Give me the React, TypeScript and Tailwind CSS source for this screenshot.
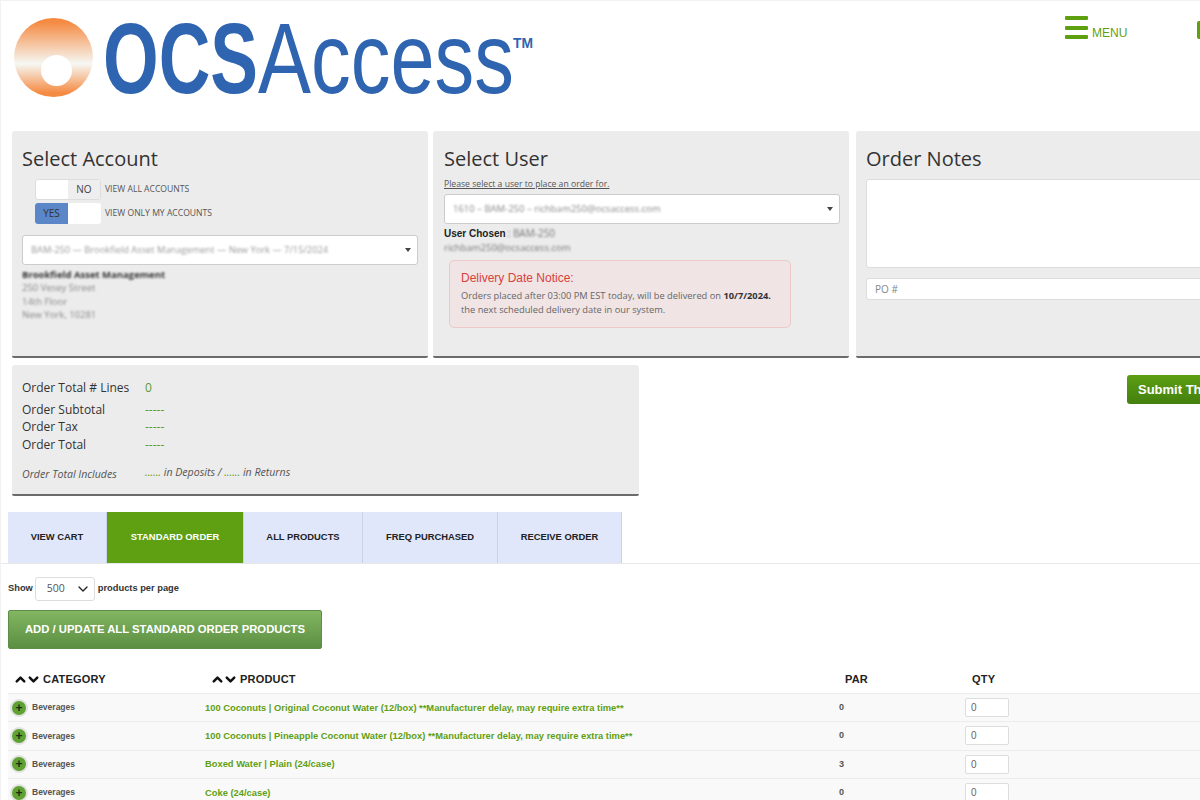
import { ChevronDown, ChevronUp } from "lucide-react";

const rows = [
  { name: "100 Coconuts | Original Coconut Water (12/box) **Manufacturer delay, may require extra time**", par: 0 },
  { name: "100 Coconuts | Pineapple Coconut Water (12/box) **Manufacturer delay, may require extra time**", par: 0 },
  { name: "Boxed Water | Plain (24/case)", par: 3 },
  { name: "Coke (24/case)", par: 0 },
];

const tabs = [
  { label: "VIEW CART", width: "w-[99px]" },
  { label: "STANDARD ORDER", width: "w-[137px]", active: true },
  { label: "ALL PRODUCTS", width: "w-[119px]" },
  { label: "FREQ PURCHASED", width: "w-[135px]" },
  { label: "RECEIVE ORDER", width: "w-[124px]" },
];

function Logo() {
  return (
    <svg width="540" height="104" viewBox="0 0 540 104" className="block shrink-0">
      <defs>
        <linearGradient id="disc" x1="0" y1="0" x2="0" y2="1">
          <stop offset="0.05" stopColor="#f58a42" />
          <stop offset="0.58" stopColor="#f6f8f4" />
          <stop offset="0.95" stopColor="#f58a42" />
        </linearGradient>
      </defs>
      <circle cx="52.5" cy="56.5" r="39.5" fill="url(#disc)" />
      <circle cx="55.5" cy="69.5" r="15.5" fill="#fff" />
      <text x="102" y="92" fontFamily="Liberation Sans" fontWeight="700" fontSize="100" fill="#2f65b0" textLength="155" lengthAdjust="spacingAndGlyphs">
        OCS
      </text>
      <text x="257" y="92" fontFamily="Liberation Sans" fontSize="100" fill="#2f65b0" textLength="256" lengthAdjust="spacingAndGlyphs">
        Access
      </text>
      <text x="512" y="47" fontFamily="Liberation Sans" fontWeight="700" fontSize="15" fill="#2f65b0" textLength="20" lengthAdjust="spacingAndGlyphs">
        TM
      </text>
    </svg>
  );
}

function Caret() {
  return <span className="ml-auto h-0 w-0 border-x-[3px] border-t-[4px] border-x-transparent border-t-[#444]" />;
}

function Panel({ title, className, children }: { title: string; className: string; children: React.ReactNode }) {
  return (
    <div className={`h-[227px] shrink-0 rounded-t-[3px] rounded-b-[2px] border-b-2 border-[#6b6b6b] bg-[#ececec] pt-[16px] ${className}`}>
      <h2 className="text-[20px] leading-[24px] text-[#333]">{title}</h2>
      {children}
    </div>
  );
}

function AccountPanel() {
  return (
    <Panel title="Select Account" className="w-[416px] pl-[10px] pr-[10px]">
      <div className="mt-[8px] ml-[13px] flex h-[21px] items-center gap-[4px] text-[8.6px] text-[#555]">
        <div className="flex h-[21px] w-[66px] overflow-hidden rounded-[3px] border border-[#ddd] bg-white">
          <span className="w-[33px]" />
          <span className="flex w-[33px] items-center justify-center bg-[#eeeeee] text-[10px] text-[#444]">NO</span>
        </div>
        VIEW ALL ACCOUNTS
      </div>
      <div className="mt-[3px] ml-[13px] flex h-[21px] items-center gap-[4px] text-[8.6px] text-[#555]">
        <div className="flex h-[21px] w-[66px] overflow-hidden rounded-[3px] bg-white">
          <span className="flex w-[33px] items-center justify-center bg-[#5b86c8] text-[10px] text-[#333]">YES</span>
          <span className="w-[33px]" />
        </div>
        VIEW ONLY MY ACCOUNTS
      </div>
      <div className="mt-[11px] flex h-[30px] items-center rounded-[3px] border border-[#ccc] bg-white pl-[8px] pr-[6px]">
        <span className="text-[9.3px] text-[#999] blur-[0.8px]">BAM-250 — Brookfield Asset Management — New York — 7/15/2024</span>
        <Caret />
      </div>
      <div className="mt-[3px] text-[9.5px] leading-[13.3px] text-[#888] blur-[1px]">
        <div className="font-bold text-[#333]">Brookfield Asset Management</div>
        <div>250 Vesey Street</div>
        <div>14th Floor</div>
        <div>New York, 10281</div>
      </div>
    </Panel>
  );
}

function UserPanel() {
  return (
    <Panel title="Select User" className="ml-[5px] w-[416px] pl-[11px] pr-[9px]">
      <div className="mt-[8px] h-[11px] text-[8.65px] leading-[11px] text-[#555] underline">Please select a user to place an order for.</div>
      <div className="mt-[4px] flex h-[30px] items-center rounded-[3px] border border-[#ccc] bg-white pl-[8px] pr-[6px]">
        <span className="text-[9.5px] text-[#888] blur-[1px]">1610 – BAM-250 – richbam250@ocsaccess.com</span>
        <Caret />
      </div>
      <div className="mt-[3px] flex h-[13px] items-center font-['Liberation_Sans',sans-serif] text-[10px] font-bold text-[#222]">
        User Chosen
        <span className="ml-[2px] font-['Open_Sans',sans-serif] font-normal text-[#777] blur-[1px]">: BAM-250</span>
      </div>
      <div className="mt-[1px] h-[13px] text-[9.5px] leading-[13px] text-[#777] blur-[1px]">richbam250@ocsaccess.com</div>
      <div className="mt-[6px] ml-[5px] h-[68px] w-[342px] rounded-[5px] border border-[#eccaca] bg-[#f0e4e4] pt-[9px] pl-[11px]">
        <div className="font-['Liberation_Sans',sans-serif] text-[12px] leading-[16px] text-[#d8413c]">Delivery Date Notice:</div>
        <div className="mt-[3px] text-[9.3px] leading-[14px] whitespace-nowrap text-[#666]">
          Orders placed after 03:00 PM EST today, will be delivered on <b className="text-[#333]">10/7/2024.</b>
          <br />
          the next scheduled delivery date in our system.
        </div>
      </div>
    </Panel>
  );
}

function NotesPanel() {
  return (
    <Panel title="Order Notes" className="ml-[7px] w-[416px] pl-[10px]">
      <div className="mt-[8px] h-[89px] rounded-[3px] border border-[#ddd] bg-white" />
      <div className="mt-[10px] flex h-[22px] items-center rounded-[3px] border border-[#ddd] bg-white pl-[8px] text-[10px] text-[#888]">PO #</div>
    </Panel>
  );
}

function TotalRow({ label, value }: { label: string; value: string }) {
  return (
    <div className="flex h-[17.5px] items-center text-[12px] text-[#333]">
      <span className="w-[123px]">{label}</span>
      <span className="text-[#5b9a2a]">{value}</span>
    </div>
  );
}

function Plus() {
  return (
    <span className="flex h-[18px] w-[18px] shrink-0 items-center justify-center rounded-full border-2 border-[#e2e2e2] bg-[#5fa133] font-['Liberation_Sans',sans-serif] text-[12px] leading-none font-bold text-[#1d2b12]">
      +
    </span>
  );
}

function SortArrows() {
  return (
    <span className="mr-[2px] flex -space-x-[2px]">
      <ChevronUp size={15} strokeWidth={4} className="text-[#111]" />
      <ChevronDown size={15} strokeWidth={4} className="text-[#111]" />
    </span>
  );
}

export default function App() {
  return (
    <div className="h-[800px] w-[1200px] overflow-hidden border-t border-l border-[#f2f2f2] bg-white font-['Open_Sans',sans-serif]">
      <header className="flex h-[130px]">
        <Logo />
        <div className="ml-[524px] flex h-[40px] shrink-0 pt-[15px] text-[#5f9f12]">
          <div className="flex h-[23px] w-[23px] flex-col justify-between">
            <span className="h-[4px] rounded-[1px] bg-[#5fa010]" />
            <span className="h-[4px] rounded-[1px] bg-[#5fa010]" />
            <span className="h-[4px] rounded-[1px] bg-[#5fa010]" />
          </div>
          <span className="mt-[10px] ml-[4px] font-['Liberation_Sans',sans-serif] text-[12px] leading-[14px]">MENU</span>
          <span className="mt-[5px] ml-[70px] h-[18px] w-[6px] rounded-l-[2px] bg-[#5fa010]" />
        </div>
      </header>

      <section className="flex w-[1400px] pl-[11px]">
        <AccountPanel />
        <UserPanel />
        <NotesPanel />
      </section>

      <section className="mt-[7px] flex w-[1400px] pl-[11px]">
        <div className="h-[131px] w-[627px] shrink-0 rounded-t-[3px] rounded-b-[2px] border-b-2 border-[#6b6b6b] bg-[#ececec] pt-[14px] pl-[10px]">
          <div className="flex h-[18px] items-center text-[12px] text-[#333]">
            <span className="w-[123px]">Order Total # Lines</span>
            <span className="text-[#5b9a2a]">0</span>
          </div>
          <div className="mt-[4px]">
            <TotalRow label="Order Subtotal" value="-----" />
            <TotalRow label="Order Tax" value="-----" />
            <TotalRow label="Order Total" value="-----" />
          </div>
          <div className="mt-[11px] flex text-[10.6px] text-[#555] italic">
            <span className="w-[123px] pt-[2px]">Order Total Includes</span>
            <span>
              <span className="text-[#5b9a2a]">......</span> in Deposits / <span className="text-[#5b9a2a]">......</span> in Returns
            </span>
          </div>
        </div>
        <div className="mt-[10px] ml-[488px] flex h-[29px] w-[130px] shrink-0 items-center rounded-[3px] bg-gradient-to-b from-[#5c9e12] to-[#44800e] pl-[11px] font-['Liberation_Sans',sans-serif] text-[13px] font-bold whitespace-nowrap text-white">
          Submit This Order
        </div>
      </section>

      <nav className="mt-[16px] flex border-b border-[#e8e8e8] pl-[7px] font-['Liberation_Sans',sans-serif] text-[9.4px] font-bold">
        {tabs.map((tab) => (
          <div
            key={tab.label}
            className={`flex h-[51px] items-center justify-center border-r border-[#c9d2e6] ${tab.width} ${tab.active ? "bg-[#5fa013] text-white" : "bg-[#e1e7fb] text-[#222]"}`}
          >
            {tab.label}
          </div>
        ))}
      </nav>

      <div className="mt-[12px] flex h-[25px] items-center pl-[7px] font-['Liberation_Sans',sans-serif] text-[9.3px] font-bold text-[#333]">
        Show
        <span className="mr-[3px] ml-[2px] flex h-[24px] w-[60px] items-center rounded-[3px] border border-[#ddd] pr-[3px] pl-[11px] font-['Open_Sans',sans-serif] text-[10.5px] font-normal text-[#555]">
          500
          <ChevronDown size={16} strokeWidth={2} className="ml-auto text-[#222]" />
        </span>
        products per page
      </div>

      <div className="mt-[9px] ml-[7px] flex h-[39px] w-[314px] items-center justify-center rounded-[2px] border border-[#5e8f48] bg-gradient-to-b from-[#82b661] to-[#5c8f42] font-['Liberation_Sans',sans-serif] text-[11.3px] font-bold text-white">
        ADD / UPDATE ALL STANDARD ORDER PRODUCTS
      </div>

      <div className="mt-[17px] ml-[7px] font-['Liberation_Sans',sans-serif]">
        <div className="grid h-[27px] grid-cols-[197px_634px_126px_1fr] items-center text-[11px] font-bold tracking-[0.2px] text-[#222]">
          <div className="flex items-center pl-[5px]">
            <SortArrows />
            CATEGORY
          </div>
          <div className="flex items-center pl-[5px]">
            <SortArrows />
            PRODUCT
          </div>
          <div className="pl-[6px]">PAR</div>
          <div className="pl-[7px]">QTY</div>
        </div>
        {rows.map((row) => (
          <div key={row.name} className="grid h-[28.33px] grid-cols-[197px_634px_126px_1fr] items-center border-t border-[#ececec] bg-[#f9f9f9]">
            <div className="flex items-center gap-[4px] pl-[2px] text-[8.5px] font-bold text-[#555]">
              <Plus />
              Beverages
            </div>
            <div className="text-[9.35px] font-bold text-[#5f9f12]">{row.name}</div>
            <div className="text-[9px] font-bold text-[#555]">{row.par}</div>
            <div className="flex h-[19px] w-[44px] items-center rounded-[2px] border border-[#ddd] bg-white pl-[5px] text-[10px] text-[#666]">0</div>
          </div>
        ))}
      </div>
    </div>
  );
}
